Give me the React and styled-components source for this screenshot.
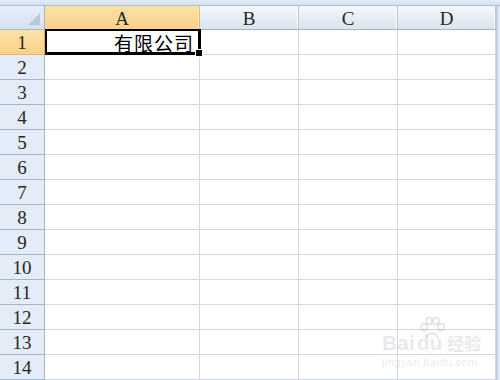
import React from "react";
import styled, { createGlobalStyle, css } from "styled-components";

const Global = createGlobalStyle`
  html, body { margin: 0; padding: 0; background: #ffffff; }
  body { width: 500px; height: 380px; overflow: hidden; }
`;

const Page = styled.div`
  position: relative;
  width: 500px;
  height: 380px;
  display: flex;
  flex-direction: column;
  background: #dfe8f5;
  overflow: hidden;
`;

const TopBand = styled.div`
  height: 5px;
  background: linear-gradient(#e4ecf7, #d5e1f0);
  border-bottom: 1px solid #a9bfd6;
`;

const Body = styled.div`
  display: flex;
  flex: 1;
  min-height: 0;
`;

const Sheet = styled.div`
  width: 496px;
  display: grid;
  grid-template-columns: 45px 155px 99px 99px 98px;
  grid-auto-rows: 25px;
  grid-template-rows: 24px;
  background: #ffffff;
  align-content: start;
`;

const RightEdge = styled.div`
  width: 4px;
  background: linear-gradient(90deg, #c9d7e8, #e6eef8);
  border-left: 1px solid #b6c8dc;
`;

const headerFont = css`
  font-family: "Liberation Serif", "DejaVu Serif", serif;
  font-size: 19px;
  color: #262626;
`;

const Corner = styled.div`
  position: relative;
  box-sizing: border-box;
  background: linear-gradient(#e7eef8, #d6e2f1);
  border-right: 1px solid #9eb6ce;
  border-bottom: 1px solid #9eb6ce;
`;

const CornerTri = styled.div`
  position: absolute;
  right: 4px;
  bottom: 4px;
  width: 0;
  height: 0;
  border-left: 12px solid transparent;
  border-bottom: 12px solid #b9c7d8;
`;

const ColHead = styled.div`
  ${headerFont}
  box-sizing: border-box;
  display: flex;
  align-items: center;
  justify-content: center;
  padding-top: 2px;
  border-right: 1px solid ${(p) => (p.$active ? "#f2b45e" : "#b4c6da")};
  border-bottom: 1px solid ${(p) => (p.$active ? "#f2a93c" : "#9eb6ce")};
  background: ${(p) =>
    p.$active
      ? "linear-gradient(#fbe2a6, #f8d18a)"
      : "linear-gradient(#f6f9fc, #e5ebf3 60%, #dce4ee)"};
  box-shadow: inset -1px 0 0 ${(p) => (p.$active ? "#fde9c0" : "#ffffff")};
`;

const RowHead = styled.div`
  ${headerFont}
  box-sizing: border-box;
  display: flex;
  align-items: center;
  justify-content: center;
  padding-top: 2px;
  border-right: 1px solid ${(p) => (p.$active ? "#f2a93c" : "#9eb6ce")};
  border-bottom: 1px solid ${(p) => (p.$active ? "#f2b45e" : "#9eb6ce")};
  background: ${(p) =>
    p.$active ? "linear-gradient(#fbe2a6, #f8d18a)" : "#e4ecf7"};
`;

const Cell = styled.div`
  position: relative;
  box-sizing: border-box;
  border-right: 1px solid #d0d7e5;
  border-bottom: 1px solid #d0d7e5;
  background: #ffffff;
  display: flex;
  align-items: center;
  justify-content: flex-end;
  font-family: "Noto Sans CJK SC", "Noto Sans", sans-serif;
  font-size: 19px;
  line-height: 1;
  color: #000000;
  padding-right: 5px;
`;

const Selection = styled.div`
  position: absolute;
  z-index: 2;
  left: 0;
  top: -1px;
  right: -2px;
  bottom: -1px;
  border-style: solid;
  border-color: #000000;
  border-width: 2px 3px 3px 2px;
  pointer-events: none;
`;

const FillHandle = styled.div`
  position: absolute;
  right: -5px;
  bottom: -5px;
  width: 6px;
  height: 6px;
  background: #000000;
  border: 1px solid #ffffff;
`;

const CellText = styled.span`
  position: relative;
  top: 0px;
  letter-spacing: 1px;
`;

const Watermark = styled.div`
  position: absolute;
  z-index: 3;
  left: 382px;
  top: 332px;
  display: flex;
  flex-direction: column;
  align-items: flex-start;
  color: rgba(170, 178, 190, 0.28);
  font-family: "Liberation Sans", "Noto Sans CJK SC", sans-serif;
  pointer-events: none;
`;

const MarkTop = styled.div`
  display: flex;
  align-items: flex-end;
  gap: 2px;
  font-size: 21px;
  font-weight: bold;
  line-height: 1;
`;

const MarkSub = styled.div`
  font-size: 11px;
  margin-top: 3px;
  letter-spacing: 0.4px;
`;

const Paw = styled.svg`
  position: absolute;
  left: 36px;
  top: -16px;
`;

const cols = ["A", "B", "C", "D"];
const rows = Array.from({ length: 14 }, (_, i) => i + 1);

export default function App() {
  return (
    <>
      <Global />
      <Page>
        <TopBand />
        <Body>
          <Sheet>
            <Corner>
              <CornerTri />
            </Corner>
            {cols.map((c, i) => (
              <ColHead key={c} $active={i === 0}>
                {c}
              </ColHead>
            ))}
            {rows.map((r) => (
              <React.Fragment key={r}>
                <RowHead $active={r === 1}>{r}</RowHead>
                {cols.map((c, i) =>
                  r === 1 && i === 0 ? (
                    <Cell key={c}>
                      <CellText>有限公司</CellText>
                      <Selection>
                        <FillHandle />
                      </Selection>
                    </Cell>
                  ) : (
                    <Cell key={c} />
                  )
                )}
              </React.Fragment>
            ))}
          </Sheet>
          <RightEdge />
        </Body>
        <Watermark>
          <Paw width="28" height="24" viewBox="0 0 28 24">
            <g fill="none" stroke="rgba(170,178,190,0.4)" strokeWidth="1.5">
              <ellipse cx="6" cy="11" rx="3" ry="3.5" />
              <ellipse cx="11" cy="5" rx="3" ry="3.5" />
              <ellipse cx="18" cy="5" rx="3" ry="3.5" />
              <ellipse cx="23" cy="11" rx="3" ry="3.5" />
              <path d="M8 22 C9 16 19 16 20 22" />
            </g>
          </Paw>
          <MarkTop>
            <span>Bai</span>
            <span>du</span>
            <span style={{ fontSize: 17, marginLeft: 3 }}>经验</span>
          </MarkTop>
          <MarkSub>jingyan.baidu.com</MarkSub>
        </Watermark>
      </Page>
    </>
  );
}
